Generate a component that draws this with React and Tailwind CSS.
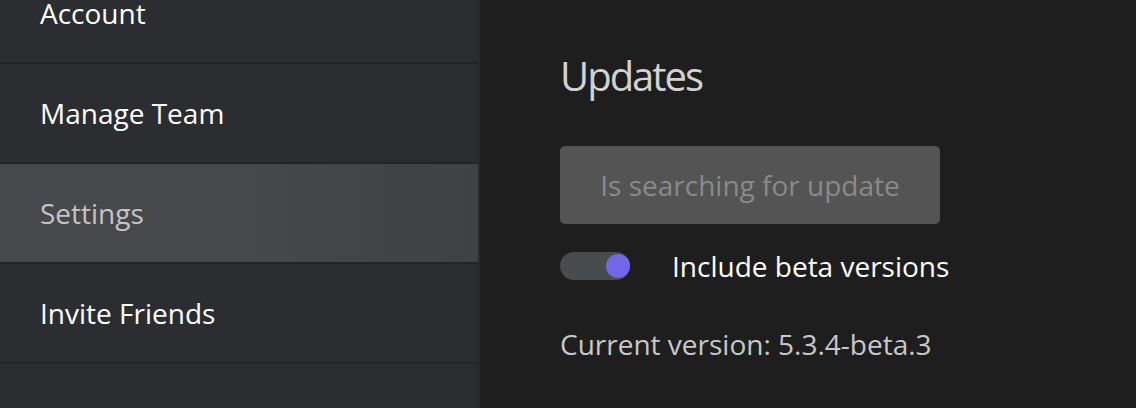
export default function App() {
  const items = ["Account", "Manage Team", "Settings", "Invite Friends", ""];
  return (
    <div
      className="flex h-[408px] w-[1136px] overflow-hidden bg-[#1e1e1e]"
      style={{ fontFamily: '"Open Sans", "Noto Sans", sans-serif' }}
    >
      <div className="flex w-[480px] shrink-0 flex-col border-r-2 border-[#2a2a2b] bg-[#232426]">
        <div className="-mt-[36px] flex flex-col gap-[2px]">
          {items.map((label, i) => (
            <div
              key={i}
              className={
                "flex h-[98px] shrink-0 items-center pl-[40px] text-[28px] leading-[38px] " +
                (label === "Settings"
                  ? "bg-gradient-to-r from-[#47484b] via-[#47484b] to-[#404144] text-[#c4c4c4]"
                  : "bg-[#2c2d30] text-white")
              }
            >
              {label}
            </div>
          ))}
        </div>
      </div>
      <div className="flex flex-col pl-[80px] pt-[52px]">
        <h1 className="text-[40px] leading-[48px] tracking-[-2px] text-[#d2d2d2]">Updates</h1>
        <div className="mt-[46px] flex h-[78px] w-[380px] items-center justify-center rounded-[5px] bg-[#545454] text-[28px] text-[#8a8a8a]">
          Is searching for update
        </div>
        <div className="mt-[28px] flex h-[28px] items-center">
          <div className="relative h-[28px] w-[70px] shrink-0 rounded-full bg-[#4a4b4d]">
            <div className="absolute right-0 top-[2px] h-[24px] w-[24px] rounded-full bg-[#7068e8]" />
          </div>
          <span className="ml-[42px] whitespace-nowrap text-[28px] leading-[38px] text-white">Include beta versions</span>
        </div>
        <div className="mt-[45px] whitespace-nowrap text-[28px] leading-[38px] text-[#c8c8c8]">Current version: 5.3.4-beta.3</div>
      </div>
    </div>
  );
}
